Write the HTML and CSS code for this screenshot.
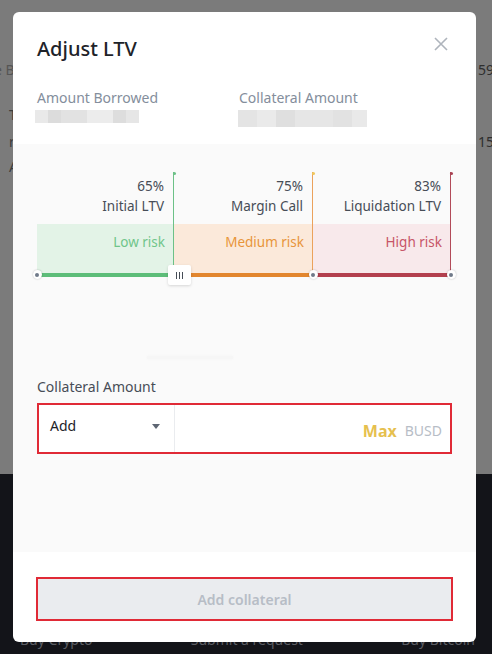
FILE: index.html
```html
<!DOCTYPE html>
<html>
<head>
<meta charset="utf-8">
<link rel="stylesheet" href="styles.css">
</head>
<body>
<div class="page">
  <div class="backdrop">
    <div class="bg-row r1"><span class="bg-l">e B</span><span class="bg-r">59</span></div>
    <div class="bg-row r2"><span class="bg-l">T</span></div>
    <div class="bg-row r3"><span class="bg-l">r</span><span class="bg-r">15</span></div>
    <div class="bg-row r4"><span class="bg-l">A</span></div>
  </div>
  <div class="footer">
    <span>Buy Crypto</span>
    <span>Submit a request</span>
    <span>Buy Bitcoin</span>
  </div>

  <div class="modal">
    <div class="modal-head">
      <h2 class="title">Adjust LTV</h2>
      <svg class="close" width="14" height="14" viewBox="0 0 14 14"><path d="M1 1 L13 13 M13 1 L1 13" stroke="#aeb4bc" stroke-width="1.6" fill="none"/></svg>
    </div>
    <div class="info">
      <div class="info-item">
        <div class="info-label">Amount Borrowed</div>
        <div class="blur b1"></div>
      </div>
      <div class="info-item">
        <div class="info-label">Collateral Amount</div>
        <div class="blur b2"></div>
      </div>
    </div>

    <div class="panel">
      <div class="chart">
        <div class="col low">
          <div class="marker"><span class="pct">65%</span><span class="name">Initial LTV</span></div>
          <div class="band">Low risk</div>
          <div class="bar"></div>
        </div>
        <div class="col mid">
          <div class="marker"><span class="pct">75%</span><span class="name">Margin Call</span></div>
          <div class="band">Medium risk</div>
          <div class="bar"></div>
        </div>
        <div class="col high">
          <div class="marker"><span class="pct">83%</span><span class="name">Liquidation LTV</span></div>
          <div class="band">High risk</div>
          <div class="bar"></div>
        </div>
        <span class="knob k0"></span>
        <span class="knob k2"></span>
        <span class="knob k3"></span>
        <span class="handle"><i></i><i></i><i></i></span>
      </div>
      <div class="ghost"></div>

      <div class="field-label">Collateral Amount</div>
      <div class="field">
        <div class="select">
          <span>Add</span>
          <svg width="8" height="5" viewBox="0 0 8 5"><path d="M0 0 H8 L4 5 Z" fill="#5e6673"/></svg>
        </div>
        <div class="amount">
          <span class="max">Max</span>
          <span class="unit">BUSD</span>
        </div>
      </div>
    </div>

    <div class="actions">
      <button class="submit">Add collateral</button>
    </div>
  </div>
</div>
</body>
</html>
```

FILE: styles.css
```css
* { box-sizing: border-box; }
html, body { margin: 0; padding: 0; }
body {
  font-family: "Noto Sans", "Liberation Sans", sans-serif;
  background: #121318;
}
.page {
  position: relative;
  width: 492px;
  height: 654px;
  overflow: hidden;
  display: flex;
  flex-direction: column;
}
.backdrop {
  height: 474px;
  background: #7b7b7b;
  padding-top: 60px;
  color: #3c3c3c;
  font-size: 14px;
}
.bg-row {
  display: flex;
  justify-content: space-between;
  height: 20px;
  line-height: 20px;
}
.bg-row.r1 { margin-bottom: 25px; }
.bg-row.r1 .bg-l { margin-left: -6px; color: #555; }
.bg-row.r2 { margin-bottom: 7px; }
.bg-row.r3 { margin-bottom: 5px; }
.bg-l { margin-left: 9px; }
.bg-r { margin-right: -2px; color: #2e2e2e; }

.footer {
  flex: 1;
  background: #131419;
  color: #5b5d63;
  font-size: 14px;
  display: flex;
  justify-content: space-between;
  padding: 156px 17px 0 20px;
  line-height: 20px;
}

.modal {
  position: absolute;
  left: 13px;
  top: 12px;
  width: 463px;
  height: 630px;
  background: #fff;
  border-radius: 6px;
  overflow: hidden;
  display: flex;
  flex-direction: column;
}
.modal-head {
  display: flex;
  justify-content: space-between;
  align-items: flex-start;
  padding: 23px 28px 0 24px;
}
.title {
  margin: 0;
  font-size: 20px;
  font-weight: 500;
  line-height: 28px;
  color: #1e2329;
}
.close { margin-top: 2px; }

.info {
  display: grid;
  grid-template-columns: 202px 1fr;
  padding: 25px 24px 0 24px;
  height: 81px;
}
.info-label {
  font-size: 14px;
  line-height: 20px;
  color: #848e9c;
}
.blur {
  margin-top: 2px;
  height: 13px;
}
.blur.b1 {
  margin-left: -2px;
  width: 104px;
  background: linear-gradient(90deg, #e9e9e9 0 13px, #dcdcdc 13px 26px, #e2e2e2 26px 52px, #ececec 52px 78px, #dddddd 78px 91px, #e6e6e6 91px);
}
.blur.b2 {
  margin-left: -1px;
  width: 129px;
  height: 17px;
  background: linear-gradient(90deg, #e4e4e4 0 19px, #eaeaea 19px 38px, #dfdfdf 38px 57px, #e6e6e6 57px 95px, #e2e2e2 95px 114px, #e9e9e9 114px);
}

.panel {
  background: #fafafa;
  height: 408px;
  padding: 28px 24px 0 24px;
  display: flex;
  flex-direction: column;
}
.chart {
  position: relative;
  display: grid;
  grid-template-columns: 137px 139px 138px;
  width: 414px;
}
.col {
  display: flex;
  flex-direction: column;
  position: relative;
}
.col::before {
  content: "";
  position: absolute;
  right: -1px;
  top: 0;
  width: 3px;
  height: 3px;
  border-radius: 50%;
  background: var(--dot);
  margin-right: -1px;
}
.marker {
  height: 52px;
  display: flex;
  flex-direction: column;
  align-items: flex-end;
  padding: 4px 9px 0 0;
  font-size: 13.5px;
  line-height: 20px;
  color: #474d57;
  border-right: 1px solid var(--line);
}
.band {
  height: 49px;
  background: var(--band);
  color: var(--text);
  font-size: 13.5px;
  line-height: 20px;
  text-align: right;
  padding: 8px 8px 0 0;
  border-right: 1px solid var(--line);
}
.bar {
  height: 4px;
  background: var(--bar);
}
.low  { --line: #6cc187; --dot: #6cc187; --band: #e3f3e7; --text: #70c58a; --bar: #5dbd79; }
.mid  { --line: #eba25c; --dot: #f0c75c; --band: #fbe9da; --text: #e8953a; --bar: #e2862e; }
.high { --line: #b24b59; --dot: #a84253; --band: #f8e9eb; --text: #c75567; --bar: #b3404e; }

.knob {
  position: absolute;
  top: 98px;
  width: 9px;
  height: 9px;
  margin-left: -4.5px;
  border-radius: 50%;
  background: #fff;
  box-shadow: 0 0 2px rgba(0,0,0,0.25);
}
.knob::after {
  content: "";
  position: absolute;
  left: 2.5px;
  top: 2.5px;
  width: 4px;
  height: 4px;
  border-radius: 50%;
  background: #707a8a;
}
.k0 { left: 0; }
.k2 { left: 276px; }
.k3 { left: 414px; }
.handle {
  position: absolute;
  left: 131px;
  top: 93px;
  width: 23px;
  height: 20px;
  background: #fff;
  border-radius: 2px;
  box-shadow: 0 1px 3px rgba(0,0,0,0.15);
  display: flex;
  justify-content: center;
  align-items: center;
  gap: 2px;
}
.handle i {
  width: 1px;
  height: 7px;
  background: #474d57;
}
.ghost {
  margin: 79px 0 0 110px;
  width: 86px;
  height: 3px;
  border-radius: 2px;
  background: #f6f6f6;
  box-shadow: 0 0 3px #f4f4f4;
}

.field-label {
  margin-top: 18px;
  font-size: 14px;
  line-height: 20px;
  color: #474d57;
}
.field {
  margin-top: 6px;
  height: 51px;
  width: 415px;
  border: 2px solid #e02a36;
  background: #fff;
  display: flex;
}
.select {
  width: 136px;
  display: flex;
  align-items: center;
  justify-content: space-between;
  padding: 0 14px 6px 11px;
  border-right: 1px solid #eaecef;
  font-size: 14px;
  color: #1e2329;
}
.select svg { margin-top: 1px; }
.amount {
  flex: 1;
  display: flex;
  align-items: center;
  justify-content: flex-end;
  gap: 8px;
  padding: 4px 8px 0 0;
}
.max {
  font-size: 16px;
  font-weight: 700;
  color: #e6c04e;
}
.unit {
  font-size: 14px;
  color: #b7bdc6;
}

.actions {
  flex: 1;
  padding: 25px 23px 0 23px;
}
.submit {
  width: 417px;
  height: 44px;
  border: 2px solid #e02a36;
  background: #eaecef;
  color: #b7bdc6;
  font-family: inherit;
  font-size: 14px;
  font-weight: 600;
  padding: 0;
  display: block;
}
```
